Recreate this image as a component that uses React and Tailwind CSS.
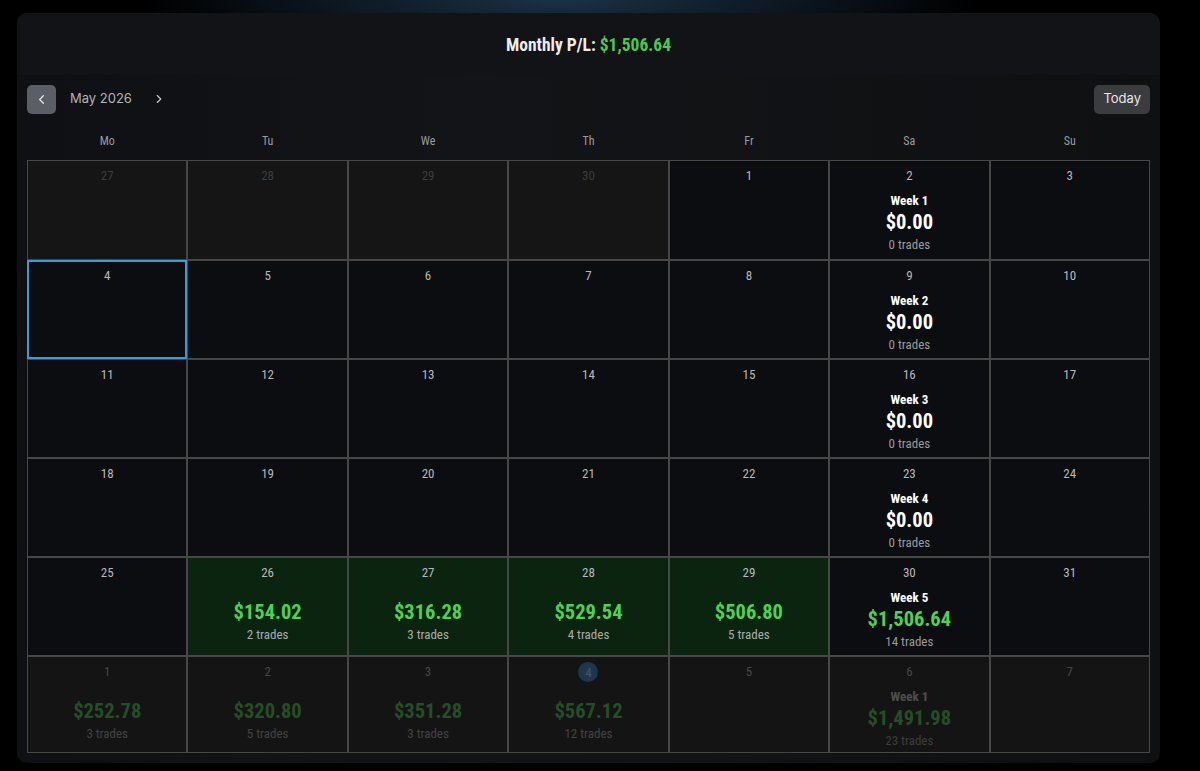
import { ChevronLeft, ChevronRight } from "lucide-react";

const cond = "font-['Roboto_Condensed','Liberation_Sans_Narrow','DejaVu_Sans_Condensed',sans-serif]";

const weekdays = ["Mo", "Tu", "We", "Th", "Fr", "Sa", "Su"];

// kind: prev | cur | next ; pl / trades for days with activity ; week summary on Saturdays
const rows = [
  [
    { d: 27, kind: "prev" },
    { d: 28, kind: "prev" },
    { d: 29, kind: "prev" },
    { d: 30, kind: "prev" },
    { d: 1, kind: "cur" },
    { d: 2, kind: "cur", week: { label: "Week 1", pl: "$0.00", trades: "0 trades" } },
    { d: 3, kind: "cur" },
  ],
  [
    { d: 4, kind: "cur", selected: true },
    { d: 5, kind: "cur" },
    { d: 6, kind: "cur" },
    { d: 7, kind: "cur" },
    { d: 8, kind: "cur" },
    { d: 9, kind: "cur", week: { label: "Week 2", pl: "$0.00", trades: "0 trades" } },
    { d: 10, kind: "cur" },
  ],
  [
    { d: 11, kind: "cur" },
    { d: 12, kind: "cur" },
    { d: 13, kind: "cur" },
    { d: 14, kind: "cur" },
    { d: 15, kind: "cur" },
    { d: 16, kind: "cur", week: { label: "Week 3", pl: "$0.00", trades: "0 trades" } },
    { d: 17, kind: "cur" },
  ],
  [
    { d: 18, kind: "cur" },
    { d: 19, kind: "cur" },
    { d: 20, kind: "cur" },
    { d: 21, kind: "cur" },
    { d: 22, kind: "cur" },
    { d: 23, kind: "cur", week: { label: "Week 4", pl: "$0.00", trades: "0 trades" } },
    { d: 24, kind: "cur" },
  ],
  [
    { d: 25, kind: "cur" },
    { d: 26, kind: "cur", pl: "$154.02", trades: "2 trades" },
    { d: 27, kind: "cur", pl: "$316.28", trades: "3 trades" },
    { d: 28, kind: "cur", pl: "$529.54", trades: "4 trades" },
    { d: 29, kind: "cur", pl: "$506.80", trades: "5 trades" },
    { d: 30, kind: "cur", week: { label: "Week 5", pl: "$1,506.64", trades: "14 trades", green: true } },
    { d: 31, kind: "cur" },
  ],
  [
    { d: 1, kind: "next", pl: "$252.78", trades: "3 trades" },
    { d: 2, kind: "next", pl: "$320.80", trades: "5 trades" },
    { d: 3, kind: "next", pl: "$351.28", trades: "3 trades" },
    { d: 4, kind: "next", pl: "$567.12", trades: "12 trades", today: true },
    { d: 5, kind: "next" },
    { d: 6, kind: "next", week: { label: "Week 1", pl: "$1,491.98", trades: "23 trades", green: true } },
    { d: 7, kind: "next" },
  ],
];

const DayCell = ({ cell }) => {
  const { d, kind, pl, trades, week, selected, today } = cell;
  const bg =
    kind === "prev"
      ? "bg-[#151515]"
      : kind === "next"
        ? "bg-[#141414]"
        : pl
          ? "bg-[#0a2410]"
          : "bg-[#0c0d10]";

  return (
    <div className={`${bg} ${selected ? "outline-2 -outline-offset-1 outline-[#3b9bd6]" : ""} flex flex-col items-center pt-[5px] ${cond}`}>
      <div className={kind === "next" ? "opacity-30 flex w-full flex-col items-center" : "flex w-full flex-col items-center"}>
        {today ? (
          <span className="flex h-[20px] w-[20px] items-center justify-center rounded-full bg-[#2f8ad8] text-[13px] leading-none text-[#dddddd]">{d}</span>
        ) : (
          <span className={`text-[13px] leading-[20px] ${kind === "prev" ? "text-[#3c3c3c]" : "text-[#b8b8b8]"}`}>{d}</span>
        )}
        {pl && (
          <div className="mt-[16px] flex flex-col items-center">
            <span className="text-[20.5px] font-bold leading-[26px] text-[#4fd154]">{pl}</span>
            <span className="mt-[2px] text-[13px] leading-[16px] text-[#ababab]">{trades}</span>
          </div>
        )}
        {week && (
          <div className="mt-[7px] flex flex-col items-center">
            <span className={`text-[13px] font-bold leading-[16px] ${kind === "next" ? "text-[#d0d0d0]" : "text-white"}`}>{week.label}</span>
            <span className={`text-[20.5px] font-bold leading-[26px] ${week.green ? "text-[#4fd154]" : "text-white"}`}>{week.pl}</span>
            <span className="mt-[2px] text-[13px] leading-[16px] text-[#9a9a9a]">{week.trades}</span>
          </div>
        )}
      </div>
    </div>
  );
};

const App = () => {
  return (
    <div className="min-h-[771px] w-[1200px] bg-black bg-[radial-gradient(ellipse_420px_60px_at_560px_0px,#1b3247,transparent)] pt-[13px] pl-[17px]">
      <div className="w-[1143px] overflow-hidden rounded-[10px] bg-[#101114] bg-[linear-gradient(90deg,#0f1013,#121417_40%,#0f1012)] pb-[10px]">
        <header className={`flex h-[62px] items-center justify-center bg-[#121316] pt-[2px] ${cond}`}>
          <h1 className="text-[17.5px] font-bold text-[#ececec]">
            Monthly P/L: <span className="text-[#4cc94f]">$1,506.64</span>
          </h1>
        </header>

        <div className="px-[10px]">
          <div className="mt-[10px] flex h-[28px] items-center justify-between">
            <div className="flex items-center">
              <button type="button" className="flex h-[29px] w-[29px] items-center justify-center rounded-[5px] bg-[#5b5e64] text-[#e6e6e6]">
                <ChevronLeft size={15} strokeWidth={2} />
              </button>
              <span className="ml-[14px] font-['Inter',sans-serif] text-[13px] text-[#b4b4b4]">May 2026</span>
              <button type="button" className="ml-[20px] flex items-center text-[#c8c8c8]">
                <ChevronRight size={14} strokeWidth={2} />
              </button>
            </div>
            <button type="button" className="h-[29px] rounded-[5px] bg-[#3b3c3f] px-[9px] font-['Inter',sans-serif] text-[13px] text-[#e6e6e6]">
              Today
            </button>
          </div>

          <div className={`mt-[20px] grid grid-cols-7 pb-[11px] text-center text-[12px] leading-[16px] text-[#9c9c9c] ${cond}`}>
            {weekdays.map((w) => (
              <span key={w}>{w}</span>
            ))}
          </div>

          <div className="grid grid-cols-7 grid-rows-[98px_97px_97px_97px_97px_95px] gap-[2px] bg-[#474747] p-[1px]">
            {rows.flat().map((cell, i) => (
              <DayCell key={i} cell={cell} />
            ))}
          </div>
        </div>
      </div>
    </div>
  );
};

export default App;
